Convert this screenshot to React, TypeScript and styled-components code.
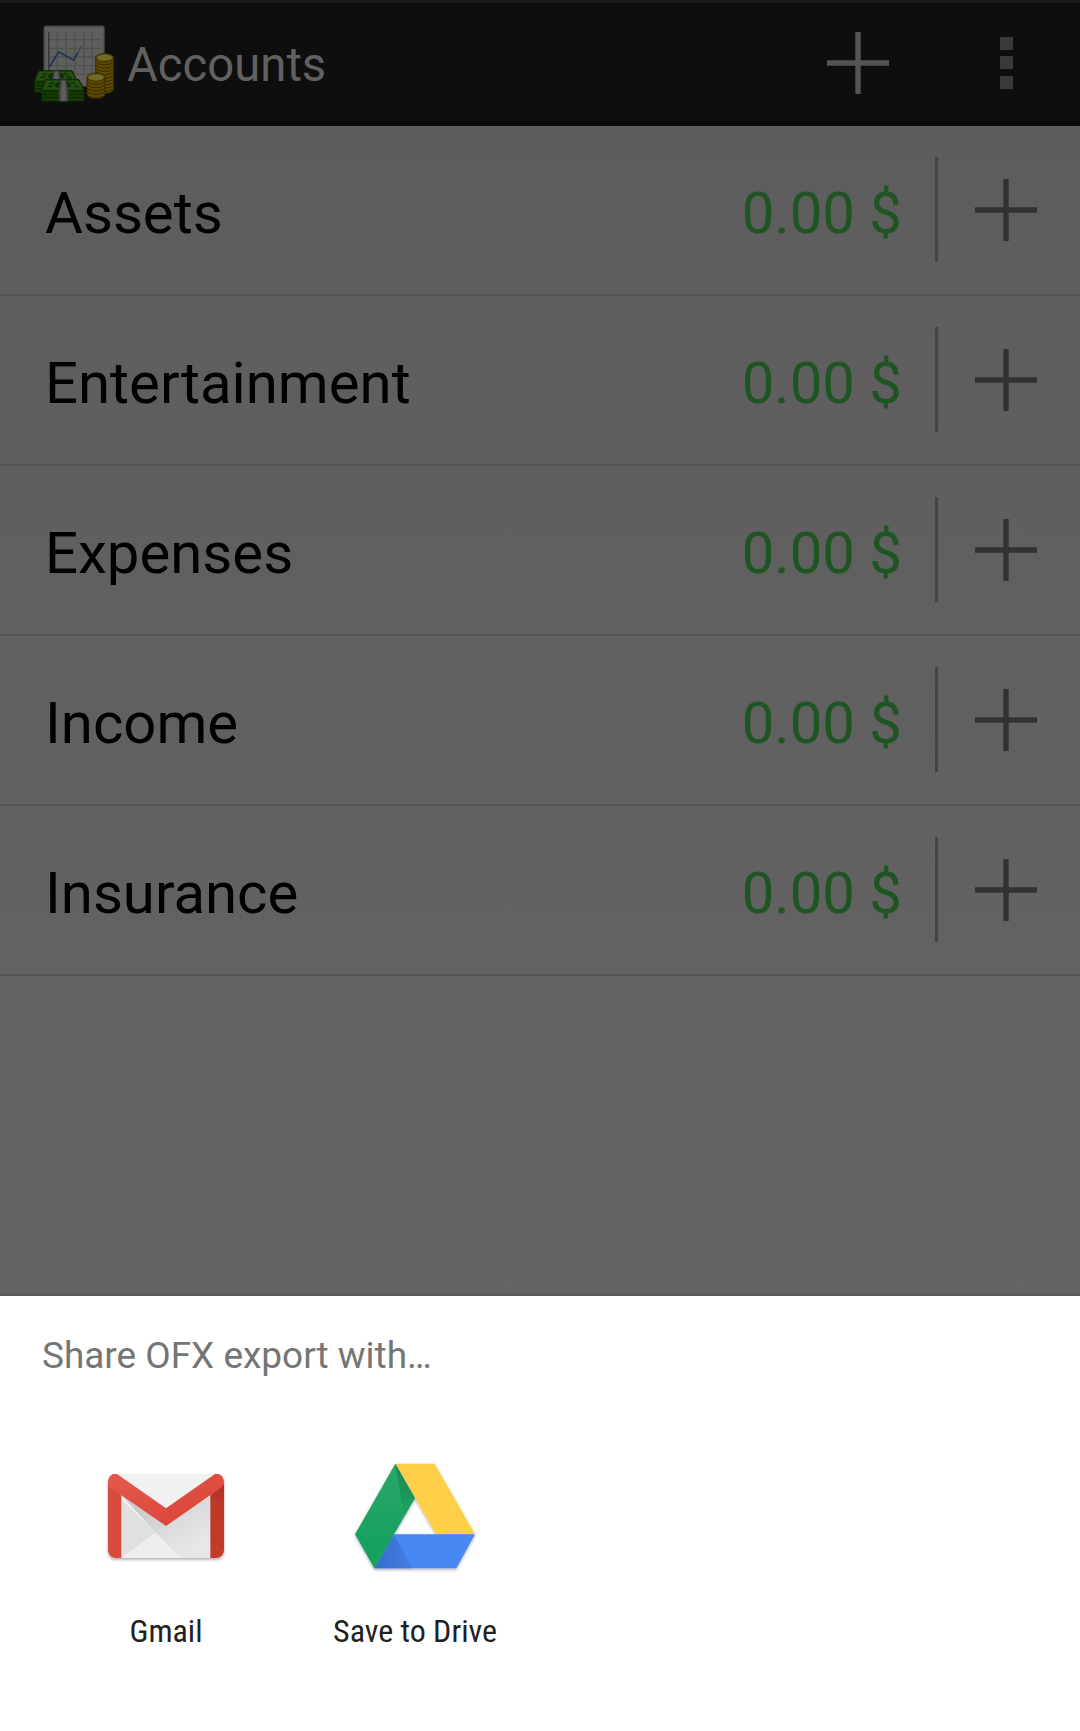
import React from "react";
import styled, { createGlobalStyle } from "styled-components";

const GlobalStyle = createGlobalStyle`
  *, *::before, *::after { box-sizing: border-box; }
  body { margin: 0; font-family: Roboto, "Liberation Sans", sans-serif; background: #646464; }
`;

const Screen = styled.div`
  display: flex;
  flex-direction: column;
  width: 1080px;
  height: 1731px;
  overflow: hidden;
  background: linear-gradient(#5d5d5d 126px, #646464 1296px);
`;

const ActionBar = styled.header`
  display: flex;
  align-items: center;
  flex: none;
  height: 126px;
  padding: 2px 0 0 32px;
  background: #0e0e0e;
  border-top: 3px solid #181818;
  border-bottom: 5px solid #0b0b0b;
  > svg { margin-top: 2px; }
`;

const Title = styled.h1`
  flex: 1;
  margin: 0 0 0 11px;
  padding-top: 4px;
  font-size: 47.25px;
  line-height: 56px;
  font-weight: 400;
  color: #616161;
`;

const IconButton = styled.button<{ $color: string; $width: number }>`
  display: flex;
  align-items: center;
  justify-content: center;
  width: ${(p) => p.$width}px;
  height: 105px;
  padding: 0;
  border: 0;
  background: none;
  color: ${(p) => p.$color};
  svg { display: block; }
`;

const AccountList = styled.main`
  display: flex;
  flex-direction: column;
  flex: 1;
`;

const AccountRow = styled.div`
  display: flex;
  align-items: center;
  height: 170px;
  padding: 0 7px 2px 45px;
  border-bottom: 2px solid #555;
  button { padding-top: 2px; }
`;

const AccountName = styled.span`
  flex: 1;
  padding-top: 7px;
  font-size: 58.1px;
  line-height: 68px;
  color: #000;
`;

const Balance = styled.span`
  padding-top: 7px;
  font-size: 58.1px;
  line-height: 68px;
  color: #1f5523;
`;

const Divider = styled.span`
  width: 3px;
  height: 105px;
  margin-left: 33px;
  background: #444;
`;

const Sheet = styled.section`
  flex: none;
  height: 435px;
  padding: 38px 42px 0;
  background: #fff;
  box-shadow: 0 0 5px rgba(0, 0, 0, 0.28);
`;

const SheetTitle = styled.h2`
  margin: 0;
  font-size: 36.95px;
  line-height: 44px;
  font-weight: 400;
  color: #757575;
`;

const Targets = styled.div`
  display: grid;
  grid-template-columns: repeat(4, 249px);
  padding-top: 72px;
`;

const Target = styled.div`
  display: flex;
  flex-direction: column;
  align-items: center;
  gap: 32px;
  padding-right: 1px;
  svg { display: block; }
`;

const TargetLabel = styled.span`
  font-family: "Roboto Condensed", Roboto, sans-serif;
  font-stretch: condensed;
  font-size: 32px;
  line-height: 38px;
  color: #212121;
`;

const PlusIcon = () => (
  <svg width="62" height="62" viewBox="0 0 62 62" fill="currentColor">
    <path d="M28.3 0h5.4v28.3H62v5.4H33.7V62h-5.4V33.7H0v-5.4h28.3z" />
  </svg>
);

const OverflowIcon = () => (
  <svg width="13" height="52" viewBox="0 0 13 52" fill="currentColor">
    <path d="M0 0h13v13H0zM0 19h13v13H0zM0 39h13v13H0z" />
  </svg>
);

const CoinStack = ({ x, top, bottom }: { x: number; top: number; bottom: number }) => {
  const rims: number[] = [];
  for (let y = top + 11; y < bottom - 4; y += 10) rims.push(y);
  return (
    <g stroke="#332400" strokeWidth="2.5">
      <path
        d={`M${x - 27} ${top}V${bottom - 10}Q${x - 24} ${bottom + 3} ${x} ${bottom + 3}T${x + 27} ${bottom - 10}V${top}z`}
        fill="#5e4a00"
      />
      {rims.map((y) => (
        <path key={y} d={`M${x - 27} ${y}q5 10 27 10t27-10`} fill="none" />
      ))}
      <ellipse cx={x} cy={top} rx="27" ry="12.5" fill="#66560e" />
      <ellipse cx={x} cy={top} rx="21" ry="8" fill="#706b40" stroke="none" />
      <ellipse cx={x} cy={top} rx="14" ry="5" fill="#72691a" stroke="none" />
    </g>
  );
};

const CashBundle = ({ x, y }: { x: number; y: number }) => (
  <g transform={`translate(${x} ${y})`}>
    <path d="M13 0H113L128 30V65H0V30z" fill="#183c06" stroke="#0c2405" strokeWidth="3" />
    <path d="M16 4H110L122 27H6z" fill="#244c14" stroke="#33601e" strokeWidth="1.5" />
    <path d="M3 35H126M3 44H126M3 54H126" stroke="#0c2405" strokeWidth="3" />
    <path d="M24 11l14-2M18 21l16-2M88 8l13 3M98 19l13 3" stroke="#0e2c09" strokeWidth="4" />
    <path d="M40 17q4-10 15-11v19q-12 0-15-8zM75 6q14 3 16 11-4 7-14 8z" fill="#102f09" />
    <path d="M58 0H73L80 30V65H53V30z" fill="#484848" stroke="#303030" strokeWidth="2" />
    <path d="M62 4h8l3 25v34H60V29z" fill="#5e5e5e" />
  </g>
);

const GnuCashIcon = () => (
  <svg width="84" height="82" viewBox="36 24 252 246">
    <rect x="71" y="32" width="183" height="183" rx="7" fill="#555" stroke="#303030" strokeWidth="1.5" />
    <rect x="77" y="38" width="171" height="171" fill="#5f5f5d" />
    <path
      d="M112 51V176M138 51V176M164 51V176M191 51V176M217 51V176M88 74H241M88 100H241M88 126H241M88 152H241M88 178H241"
      stroke="#50504f"
      strokeWidth="4"
    />
    <path d="M86 50V178" stroke="#353535" strokeWidth="4" />
    <path d="M88 156L116 111 161 136 174 112" fill="none" stroke="#1b2e4f" strokeWidth="4.5" />
    <path d="M174 112L186 91" stroke="#38465b" strokeWidth="3.5" />
    <CashBundle x={43} y={167} />
    <CashBundle x={64} y={194} />
    <CoinStack x={254} top={128} bottom={232} />
    <CoinStack x={228} top={187} bottom={248} />
  </svg>
);

const GmailIcon = () => (
  <svg width="126" height="130" viewBox="39 0 378 390">
    <defs>
      <linearGradient id="flap" x1="0" y1="0" x2="1" y2="1">
        <stop offset="0" stopColor="#e4594c" />
        <stop offset="1" stopColor="#d94336" />
      </linearGradient>
      <linearGradient id="foldShade" x1="0" y1="0" x2="1" y2="1">
        <stop offset="0" stopColor="#c6c6c6" />
        <stop offset="1" stopColor="#d8d8d8" />
      </linearGradient>
      <linearGradient id="rightShade" gradientUnits="userSpaceOnUse" x1="240" y1="205" x2="300" y2="300">
        <stop offset="0" stopColor="#d9d9d9" />
        <stop offset="1" stopColor="#e7e7e7" />
      </linearGradient>
      <linearGradient id="sideShade" x1="0" y1="0" x2="0" y2="1">
        <stop offset="0" stopColor="#ac3025" />
        <stop offset="0.3" stopColor="#c0392b" />
        <stop offset="1" stopColor="#c33a2c" />
      </linearGradient>
      <clipPath id="envelope">
        <rect x="54" y="71" width="348" height="253" rx="23" />
      </clipPath>
      <filter id="gmailShadow" x="-10%" y="-10%" width="120%" height="125%">
        <feDropShadow dx="0" dy="5" stdDeviation="4" floodColor="#000" floodOpacity="0.32" />
      </filter>
    </defs>
    <g filter="url(#gmailShadow)">
      <g clipPath="url(#envelope)">
        <path d="M54 71H402V324H54z" fill="#f1f1f1" />
        <path d="M197 248L228 226 402 110V324H270z" fill="url(#rightShade)" />
        <path d="M54 108V324H94L197 248z" fill="#e0e0e0" />
        <path d="M94 135L228 226 197 248z" fill="url(#foldShade)" />
        <path d="M94 324L197 248 270 324z" fill="#eee" />
        <path d="M54 100L94 135V324H54z" fill="#d74b3e" />
        <path d="M361 135L402 100V324H361z" fill="url(#sideShade)" />
        <path d="M54 98V71H80L228 175 376 71H402V98Q401 109 391 115L228 228 66 116Q55 110 54 98z" fill="url(#flap)" />
      </g>
    </g>
  </svg>
);

const DriveIcon = () => (
  <svg width="126" height="130" viewBox="36 0 378 390">
    <defs>
      <linearGradient id="green" x1="0" y1="0" x2="0" y2="1">
        <stop offset="0" stopColor="#2ba669" />
        <stop offset="1" stopColor="#11a05c" />
      </linearGradient>
      <linearGradient id="greenShade" x1="0" y1="0" x2="0" y2="1">
        <stop offset="0" stopColor="#1c7f4b" stopOpacity=".8" />
        <stop offset="0.6" stopColor="#1c8c52" stopOpacity=".6" />
        <stop offset="1" stopColor="#1c9c5a" stopOpacity=".1" />
      </linearGradient>
      <linearGradient id="blueShade" x1="0" y1="0" x2="1" y2="0">
        <stop offset="0" stopColor="#376dca" />
        <stop offset="1" stopColor="#427fe8" />
      </linearGradient>
      <filter id="driveShadow" x="-10%" y="-10%" width="120%" height="125%">
        <feDropShadow dx="0" dy="4" stdDeviation="4" floodColor="#000" floodOpacity="0.34" />
      </filter>
    </defs>
    <g filter="url(#driveShadow)">
      <path d="M166 41H284L405 253H289z" fill="#ffcf4a" />
      <path d="M162 253H405L349 355H103z" fill="#4688f4" />
      <path d="M162 253L217 355H103z" fill="url(#blueShade)" />
      <path d="M166 41L225 144 103 355 45 253z" fill="url(#green)" />
      <path d="M166 41L225 144 193 199z" fill="url(#greenShade)" />
    </g>
  </svg>
);

const accounts = ["Assets", "Entertainment", "Expenses", "Income", "Insurance"];

export default function App() {
  return (
    <>
      <GlobalStyle />
      <Screen>
        <ActionBar>
          <GnuCashIcon />
          <Title>Accounts</Title>
          <IconButton $color="#545454" $width={150} aria-label="Add account">
            <PlusIcon />
          </IconButton>
          <IconButton $color="#3a3a3a" $width={147} aria-label="More options">
            <OverflowIcon />
          </IconButton>
        </ActionBar>
        <AccountList>
          {accounts.map((name) => (
            <AccountRow key={name}>
              <AccountName>{name}</AccountName>
              <Balance>0.00 $</Balance>
              <Divider />
              <IconButton $color="#323232" $width={135} aria-label={`Add to ${name}`}>
                <PlusIcon />
              </IconButton>
            </AccountRow>
          ))}
        </AccountList>
        <Sheet>
          <SheetTitle>Share OFX export with…</SheetTitle>
          <Targets>
            <Target>
              <GmailIcon />
              <TargetLabel>Gmail</TargetLabel>
            </Target>
            <Target>
              <DriveIcon />
              <TargetLabel>Save to Drive</TargetLabel>
            </Target>
          </Targets>
        </Sheet>
      </Screen>
    </>
  );
}
